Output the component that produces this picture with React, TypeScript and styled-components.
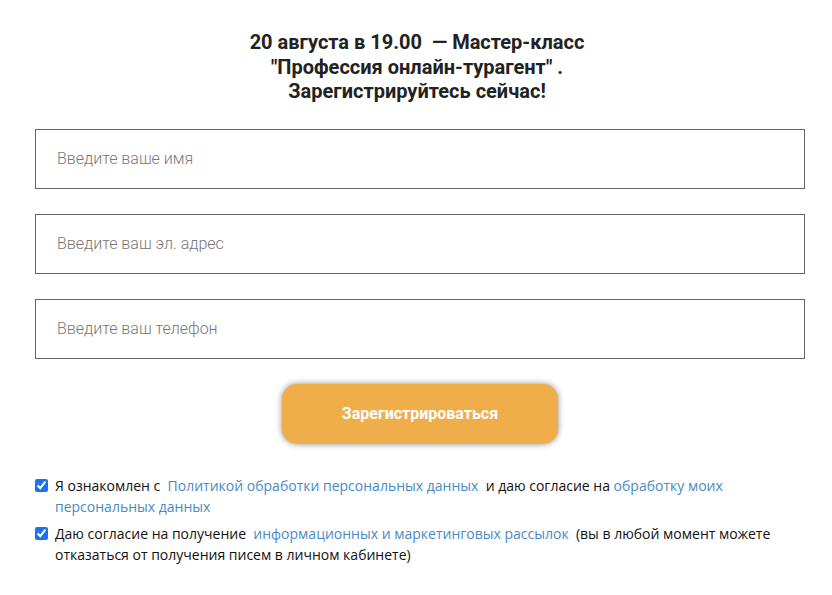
import React from "react";
import styled, { createGlobalStyle } from "styled-components";

const Global = createGlobalStyle`
  html, body { margin: 0; padding: 0; background: #fff; }
  body { font-family: Roboto, "Noto Sans", sans-serif; }
  * { box-sizing: border-box; }
`;

const Page = styled.div`
  width: 832px;
  padding-top: 30px;
  display: flex;
  flex-direction: column;
`;

const Title = styled.h2`
  margin: 0 0 25px;
  width: 834px;
  text-align: center;
  font-family: Roboto, sans-serif;
  font-weight: 700;
  font-size: 20px;
  line-height: 24.5px;
  color: #222;
`;

const Body = styled.div`
  margin-left: 35px;
  width: 770px;
  display: flex;
  flex-direction: column;
`;

const Form = styled.form`
  display: flex;
  flex-direction: column;
  gap: 25px;
`;

const Field = styled.input`
  width: 770px;
  height: 60px;
  border: 1px solid #666;
  border-radius: 0;
  padding: 0 21px;
  font-family: Roboto, sans-serif;
  font-weight: 300;
  font-size: 16px;
  color: #333;
  outline: none;
  &::placeholder { color: #777; }
`;

const ButtonRow = styled.div`
  display: flex;
  justify-content: center;
`;

const Button = styled.button`
  width: 276px;
  height: 60px;
  border: none;
  border-radius: 15px;
  background: #f0ae4a;
  color: #fff;
  font-family: Roboto, sans-serif;
  font-weight: 700;
  font-size: 16px;
  box-shadow: 0 0 6px rgba(0, 0, 0, 0.45);
  cursor: pointer;
`;

const Agreements = styled.div`
  display: flex;
  flex-direction: column;
  gap: 6px;
  margin-top: 31px;
`;

const Agree = styled.label`
  display: flex;
  align-items: flex-start;
  gap: 7px;
  font-family: "Open Sans", sans-serif;
  font-size: 14px;
  line-height: 21px;
  color: #111;
  width: 760px;
`;

const Box = styled.input`
  width: 13px;
  height: 13px;
  margin: 4px 0 0 0;
  flex: none;
  accent-color: #1a73e8;
`;

const Link = styled.a`
  color: #4a8ac4;
  text-decoration: none;
`;

export default function App() {
  return (
    <>
      <Global />
      <Page>
        <Title>
          20 августа в 19.00&nbsp; — Мастер-класс
          <br />
          "Профессия онлайн-турагент" .
          <br />
          Зарегистрируйтесь сейчас!
        </Title>
        <Body>
          <Form onSubmit={(e) => e.preventDefault()}>
            <Field placeholder="Введите ваше имя" />
            <Field placeholder="Введите ваш эл. адрес" />
            <Field placeholder="Введите ваш телефон" />
            <ButtonRow>
              <Button type="submit">Зарегистрироваться</Button>
            </ButtonRow>
          </Form>
          <Agreements>
            <Agree>
              <Box type="checkbox" defaultChecked />
              <span>
                Я ознакомлен с&nbsp; <Link href="#">Политикой обработки персональных данных</Link>&nbsp; и даю согласие на{" "}
                <Link href="#">обработку моих персональных данных</Link>
              </span>
            </Agree>
            <Agree>
              <Box type="checkbox" defaultChecked />
              <span>
                Даю согласие на получение&nbsp; <Link href="#">информационных и маркетинговых рассылок</Link>&nbsp; (вы в любой момент можете отказаться от получения писем в личном кабинете)
              </span>
            </Agree>
          </Agreements>
        </Body>
      </Page>
    </>
  );
}
